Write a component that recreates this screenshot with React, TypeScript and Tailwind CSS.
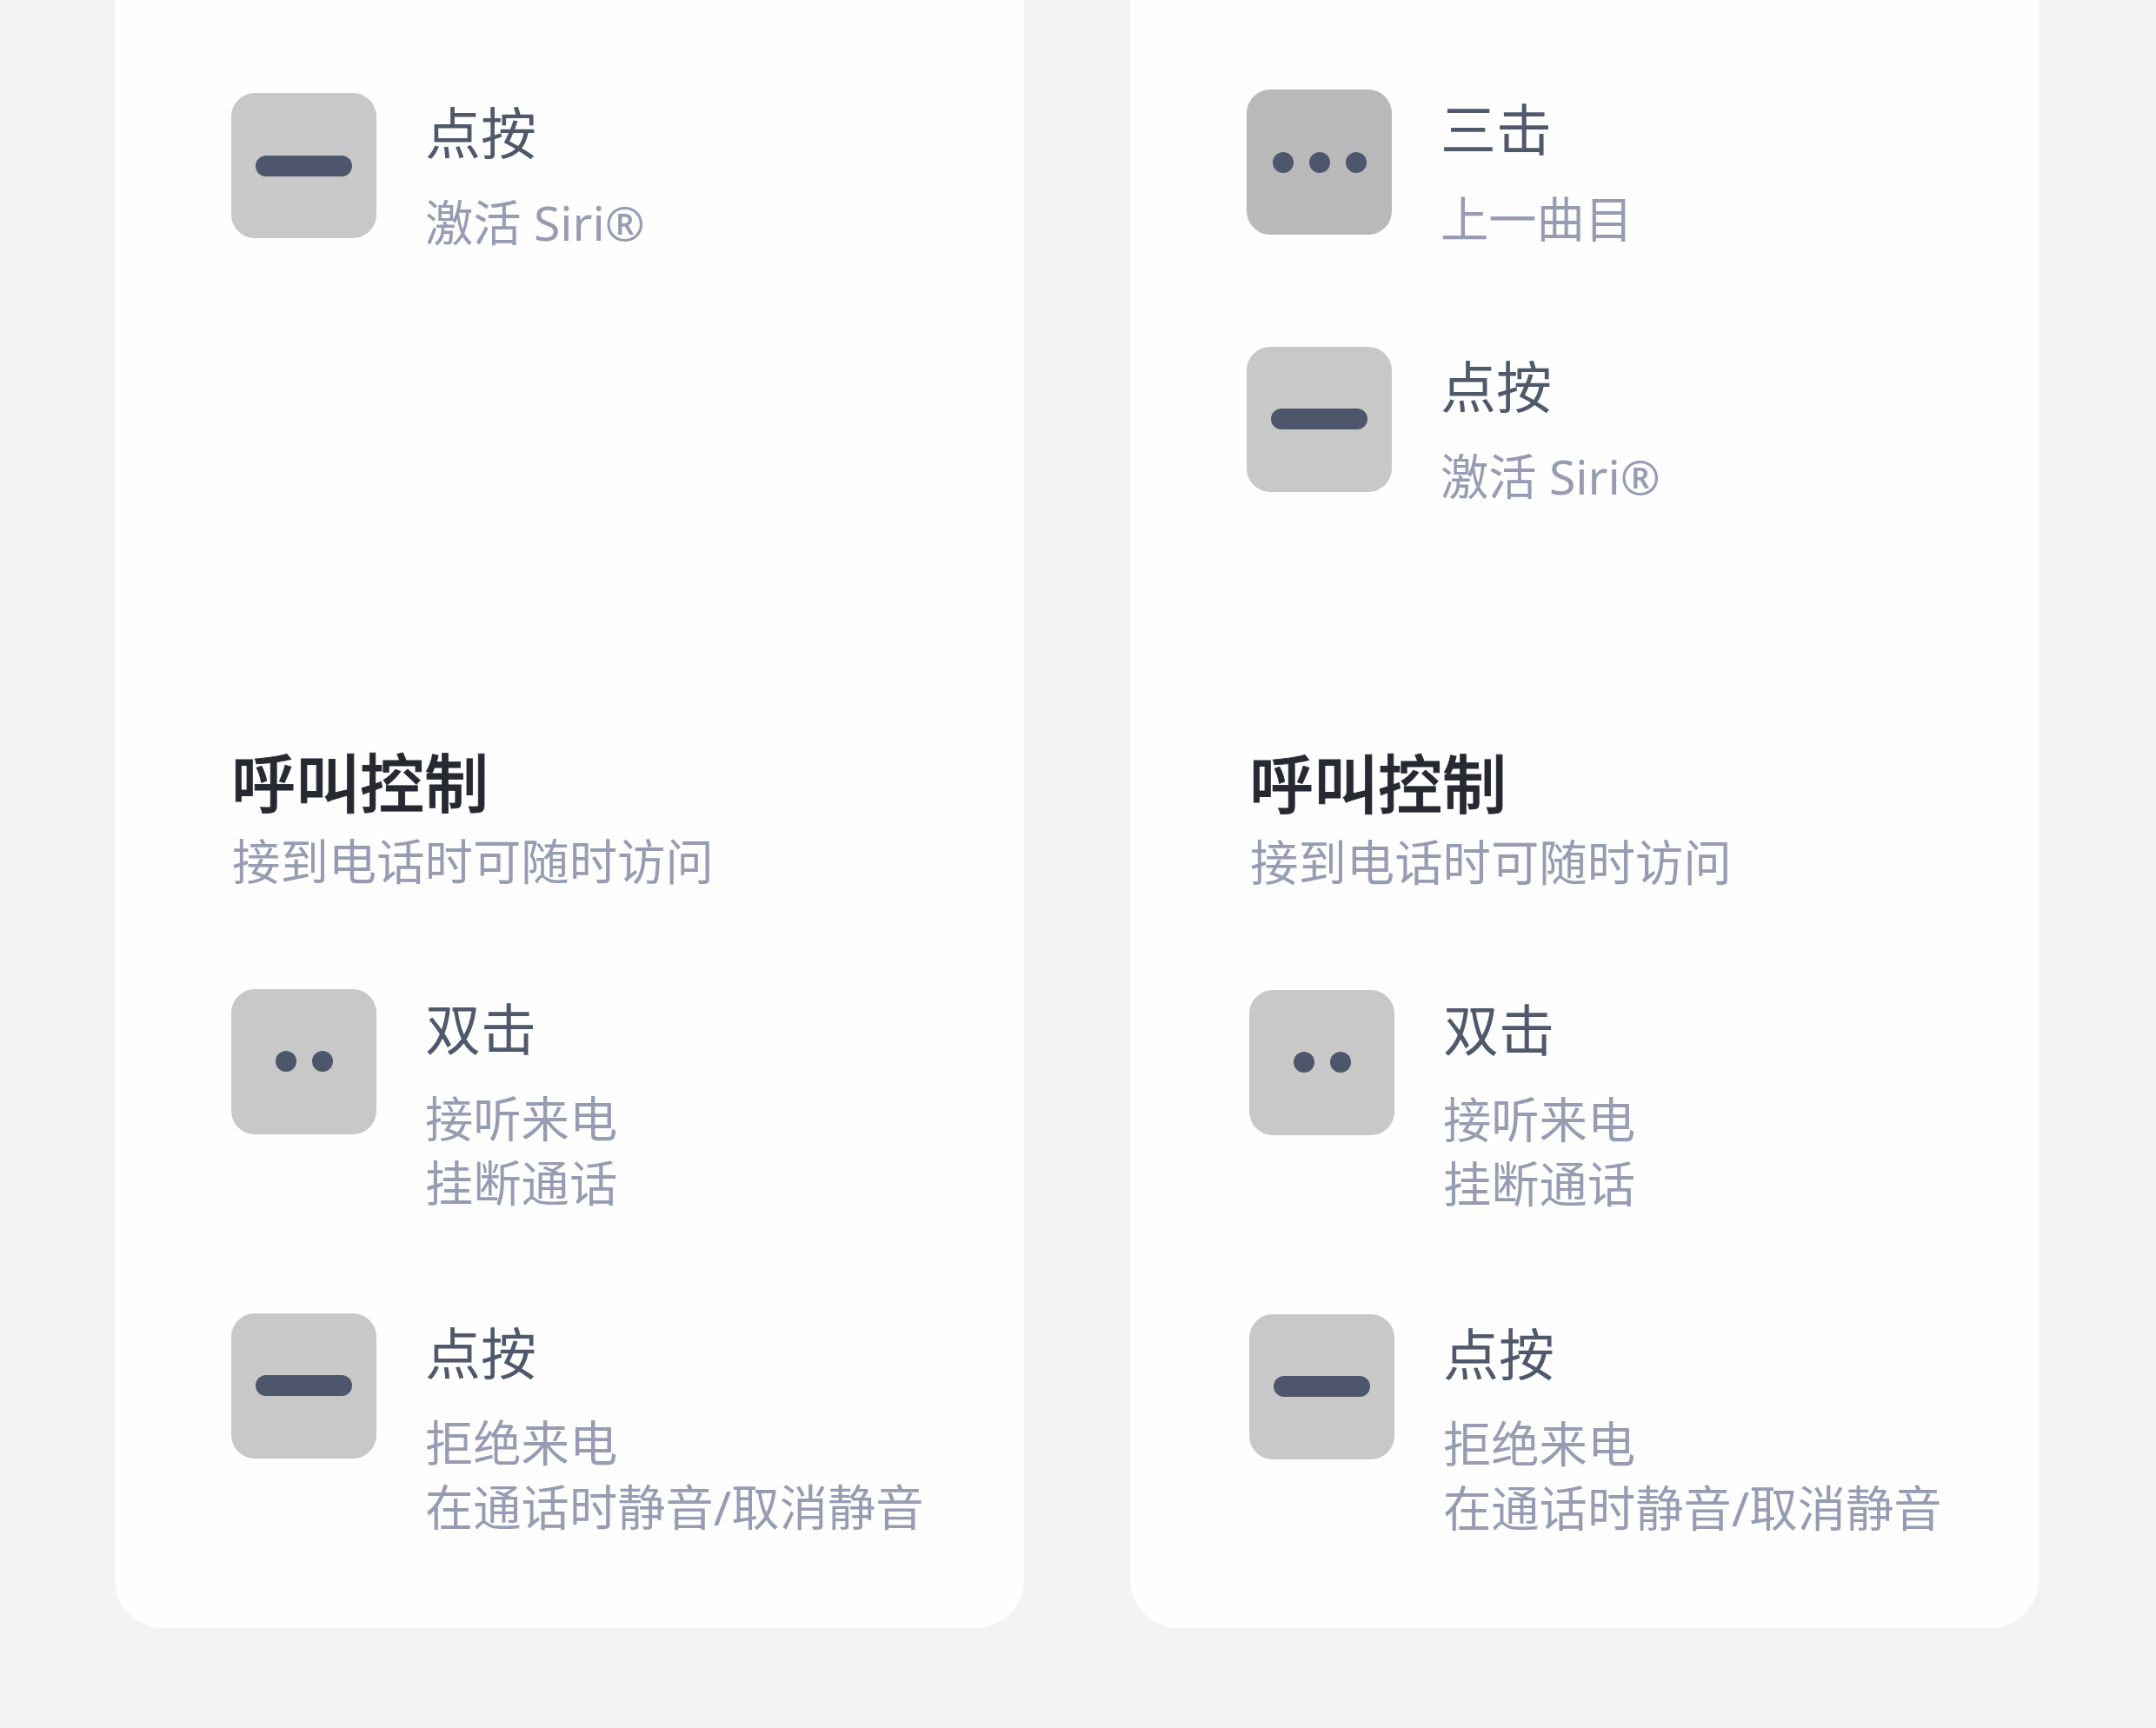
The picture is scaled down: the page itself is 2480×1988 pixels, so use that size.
import clsx from 'clsx';

type Press = 'double' | 'triple' | 'hold';

interface Control {
  press: Press;
  title: string;
  actions: string[];
}

const HOLD_SIRI: Control = { press: 'hold', title: '点按', actions: ['激活 Siri®'] };
const TRIPLE: Control = { press: 'triple', title: '三击', actions: ['上一曲目'] };

const CALL_CONTROLS: Control[] = [
  { press: 'double', title: '双击', actions: ['接听来电', '挂断通话'] },
  { press: 'hold', title: '点按', actions: ['拒绝来电', '在通话时静音/取消静音'] },
];

function PressIcon({ press }: { press: Press }) {
  const dots = press === 'triple' ? 3 : 2;

  return (
    <div
      className={clsx(
        'w-[167px] h-[167px] rounded-[27px] flex items-center justify-center gap-[18px] flex-shrink-0',
        press === 'triple' ? 'bg-[#b9b9bb]' : 'bg-[#c8c8c8]',
      )}
    >
      {press === 'hold' ? (
        <span className="w-[111px] h-6 rounded-full bg-[#4d566a]" />
      ) : (
        Array.from({ length: dots }, (_, i) => (
          <span key={i} className="w-6 h-6 rounded-full bg-[#4d566a]" />
        ))
      )}
    </div>
  );
}

function ControlRow({ control }: { control: Control }) {
  return (
    <div className="flex items-start gap-[56px]">
      <PressIcon press={control.press} />
      <div className="pt-[6px] whitespace-nowrap">
        <h3 className="text-[64px] leading-[80px] text-[#50586c]">{control.title}</h3>
        <div className="mt-[26px] text-[55.3px] leading-[74.5px] text-[#979cb3]">
          {control.actions.map(a => <p key={a}>{a}</p>)}
        </div>
      </div>
    </div>
  );
}

function CallSection() {
  return (
    <section>
      <h2 className="text-[74px] leading-[90px] font-medium text-[#262932] [-webkit-text-stroke:0.8px_#262932]">
        呼叫控制
      </h2>
      <p className="mt-2 pl-px text-[55.4px] leading-[74.5px] text-[#979cb3] whitespace-nowrap">
        接到电话时可随时访问
      </p>
      <div className="mt-[109px] flex flex-col gap-[112px]">
        {CALL_CONTROLS.map(c => <ControlRow key={c.title} control={c} />)}
      </div>
    </section>
  );
}

export default function App() {
  return (
    <main className="w-[2480px] h-[1988px] overflow-hidden bg-[#f3f3f3] pl-[132px] flex gap-[122px] font-['Noto_Sans','Noto_Sans_CJK_SC',sans-serif]">
      {/* Left earbud */}
      <div className="w-[1046px] h-[1873px] rounded-b-[56px] bg-[#fefefe] pl-[134px]">
        <section className="h-[856px] pt-[107px]">
          <ControlRow control={HOLD_SIRI} />
        </section>
        <CallSection />
      </div>

      {/* Right earbud */}
      <div className="w-[1045px] h-[1873px] rounded-b-[56px] bg-[#fefefe] pl-[134px]">
        <section className="h-[857px] pt-[103px] flex flex-col gap-[109px]">
          <ControlRow control={TRIPLE} />
          <ControlRow control={HOLD_SIRI} />
        </section>
        <div className="pl-[3px]">
          <CallSection />
        </div>
      </div>
    </main>
  );
}
